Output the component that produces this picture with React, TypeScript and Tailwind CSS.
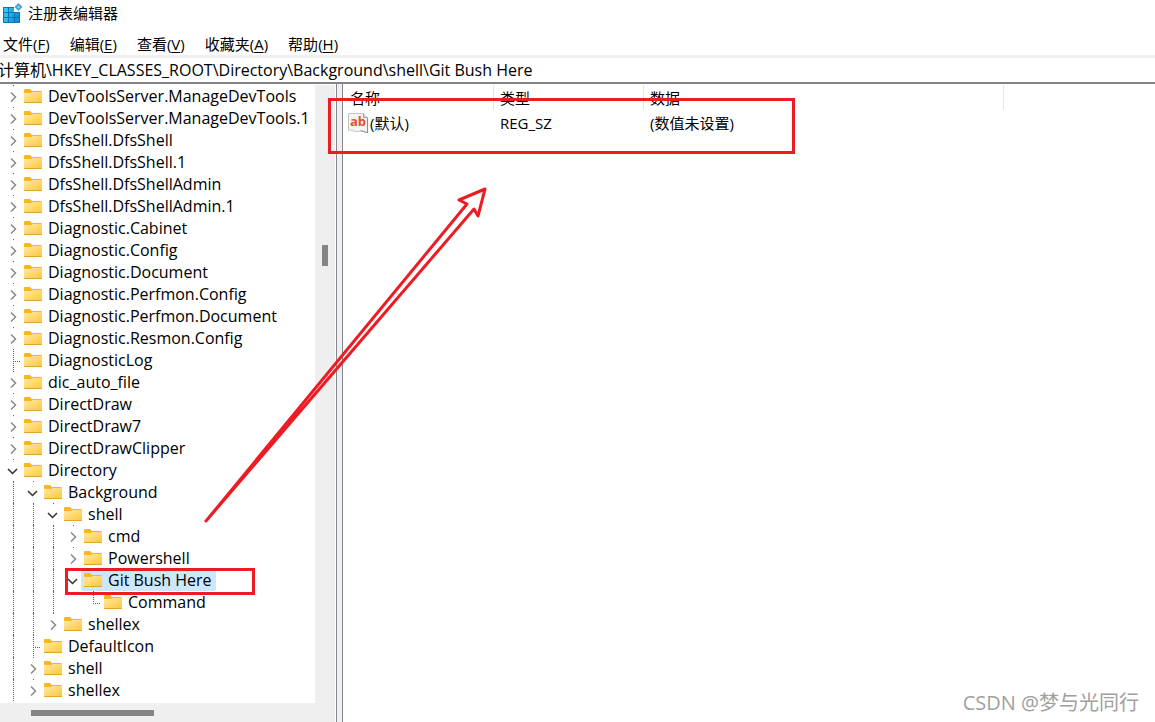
import React from "react";

type Node = {
  name: string;
  level: number;
  state?: "open" | "closed" | "leaf";
  guides?: number[];
  last?: boolean;
  selected?: boolean;
};

const nodes: Node[] = [
  { name: "DevToolsServer.ManageDevTools", level: 0 },
  { name: "DevToolsServer.ManageDevTools.1", level: 0 },
  { name: "DfsShell.DfsShell", level: 0 },
  { name: "DfsShell.DfsShell.1", level: 0 },
  { name: "DfsShell.DfsShellAdmin", level: 0 },
  { name: "DfsShell.DfsShellAdmin.1", level: 0 },
  { name: "Diagnostic.Cabinet", level: 0 },
  { name: "Diagnostic.Config", level: 0 },
  { name: "Diagnostic.Document", level: 0 },
  { name: "Diagnostic.Perfmon.Config", level: 0 },
  { name: "Diagnostic.Perfmon.Document", level: 0 },
  { name: "Diagnostic.Resmon.Config", level: 0 },
  { name: "DiagnosticLog", level: 0, state: "leaf" },
  { name: "dic_auto_file", level: 0 },
  { name: "DirectDraw", level: 0 },
  { name: "DirectDraw7", level: 0 },
  { name: "DirectDrawClipper", level: 0 },
  { name: "Directory", level: 0, state: "open" },
  { name: "Background", level: 1, state: "open", guides: [0] },
  { name: "shell", level: 2, state: "open", guides: [0, 1] },
  { name: "cmd", level: 3, guides: [0, 1, 2] },
  { name: "Powershell", level: 3, guides: [0, 1, 2] },
  { name: "Git Bush Here", level: 3, state: "open", guides: [0, 1, 2], selected: true },
  { name: "Command", level: 4, state: "leaf", guides: [0, 1, 2], last: true },
  { name: "shellex", level: 2, guides: [0, 1] },
  { name: "DefaultIcon", level: 1, state: "leaf", guides: [0] },
  { name: "shell", level: 1, guides: [0] },
  { name: "shellex", level: 1, guides: [0] },
];

const menus = [
  { label: "文件", hotkey: "F" },
  { label: "编辑", hotkey: "E" },
  { label: "查看", hotkey: "V" },
  { label: "收藏夹", hotkey: "A" },
  { label: "帮助", hotkey: "H" },
];

function RegeditIcon() {
  return (
    <svg width="20" height="20" viewBox="0 0 20 20" aria-hidden="true">
      <defs>
        <linearGradient id="cubes" x1="0" y1="0" x2="1" y2="0.3">
          <stop offset="0" stopColor="#3fd0f8" />
          <stop offset="1" stopColor="#0c8fdc" />
        </linearGradient>
      </defs>
      <path d="M0 4h11v5h6v11H0z" fill="#0b74b4" />
      <path
        d="M1 5h4v4H1zM6 5h5v4H6zM1 10h4v4H1zM6 10h5v4H6zM12 10h4v4h-4zM1 15h4v4H1zM6 15h5v4H6zM12 15h4v4h-4z"
        fill="url(#cubes)"
      />
      <path d="M15.500 0 19.500 4 15.500 8 11.500 4z" fill="#3c9fd0" />
      <path d="M15.500 2 17.500 4 15.500 6 13.500 4z" fill="#7cc8e8" />
    </svg>
  );
}

function FolderIcon() {
  return (
    <svg width="18" height="14" viewBox="0 0 18 14" className="shrink-0" aria-hidden="true">
      <defs>
        <linearGradient id="folder" x1="0" y1="0" x2="1" y2="1">
          <stop offset="0" stopColor="#ffe9a6" />
          <stop offset="1" stopColor="#ffc83d" />
        </linearGradient>
      </defs>
      <path d="M0 1a1 1 0 0 1 1-1h5l2 2h9a1 1 0 0 1 1 1v5H0z" fill="#f8b81c" />
      <path d="M0 4h7l1.500-1H18v10H0z" fill="url(#folder)" />
      <path d="M0 13h18v1H0z" fill="#e5a52a" />
    </svg>
  );
}

function StringIcon() {
  return (
    <svg width="20" height="20" viewBox="0 0 20 20" className="shrink-0" aria-hidden="true">
      <path
        d="M0.500 0.500h15l4 4v15c-3 0-4-2-7-1.500s-4 1-6.500 0-3.500-1-5.500-0.500z"
        fill="#f4f4f4"
        stroke="#c4c4c4"
      />
      <path d="M15.500 0.500v4h4" fill="#d8d8d8" stroke="#a0a0a0" />
      <path d="M19.500 5v14.500c-3 0-4-2-7-1.500" fill="none" stroke="#8e8e8e" />
      <text x="2" y="13" fontSize="13" fontWeight="700" fill="#dc5532" fontFamily="Open Sans">
        ab
      </text>
    </svg>
  );
}

function Expander({ state, last }: { state: string; last?: boolean }) {
  return (
    <svg width="20" height="22" viewBox="0 0 20 22" className="shrink-0" fill="none" aria-hidden="true">
      {state === "leaf" && (
        <path
          d={last ? "M12.5 0v12M12 12.5h9" : "M12.5 0v22M12 12.5h9"}
          stroke="#606060"
          strokeDasharray="1 1"
        />
      )}
      {state !== "leaf" && <path d="M12 0.500h1" stroke="#606060" />}
      {state === "closed" && <path d="m10 7.500 4.500 4.500-4.500 4.500" stroke="#8a8a8a" strokeWidth="1.500" />}
      {state === "open" && <path d="m7 10 4.500 4.500 4.500-4.500" stroke="#303030" strokeWidth="1.500" />}
    </svg>
  );
}

function TreeRow({ node }: { node: Node }) {
  const state = node.state ?? "closed";
  return (
    <li className="flex h-[22px] items-stretch pl-px">
      {Array.from({ length: node.level }, (_, i) => (
        <span key={i} className="flex w-5 shrink-0 pl-3">
          {node.guides?.includes(i) && <span className="border-l border-dotted border-[#606060]" />}
        </span>
      ))}
      <Expander state={state} last={node.last} />
      <button
        className={`flex items-center gap-1.5 whitespace-nowrap rounded-xs pl-[3px] pr-1 ${
          node.selected ? "bg-[#cce8ff]" : ""
        }`}
      >
        <FolderIcon />
        {node.name}
      </button>
    </li>
  );
}

function Values() {
  return (
    <table className="mt-px w-[661px] table-fixed border-separate border-spacing-0 text-left">
      <colgroup>
        <col className="w-[151px]" />
        <col className="w-[150px]" />
        <col />
      </colgroup>
      <thead>
        <tr className="h-[25px]">
          {["名称", "类型", "数据"].map((title, i) => (
            <th
              key={title}
              className={`border-r border-[#e5e5e5] p-0 font-normal ${i === 0 ? "pl-[7px]" : "pl-1.5"}`}
            >
              {title}
            </th>
          ))}
        </tr>
      </thead>
      <tbody>
        <tr className="h-[26px]">
          <td className="p-0 pl-[5px]">
            <div className="flex items-center gap-0.5">
              <StringIcon />
              (默认)
            </div>
          </td>
          <td className="p-0 pl-1.5">REG_SZ</td>
          <td className="p-0 pl-1.5">(数值未设置)</td>
        </tr>
      </tbody>
    </table>
  );
}

function Annotations() {
  return (
    <div className="pointer-events-none absolute inset-0">
      <div className="absolute left-[328px] top-[98px] h-14 w-[467px] border-3 border-[#ed1c24]" />
      <div className="absolute left-[65px] top-[568px] h-[27px] w-[190px] border-3 border-[#ed1c24]" />
      <svg className="absolute left-[190px] top-[180px]" width="310" height="350" viewBox="0 0 310 350">
        <path
          d="M16 341 277 24 269 20 295 9 288 36 284 29z"
          fill="none"
          stroke="#ed1c24"
          strokeWidth="3"
          strokeLinejoin="round"
        />
      </svg>
      <div className="absolute bottom-2 right-4 text-[20px] text-[#a0a0a0] [text-shadow:1px_1px_0_#fff]">
        CSDN @梦与光同行
      </div>
    </div>
  );
}

export default function App() {
  return (
    <div className="relative flex h-screen flex-col overflow-hidden bg-white font-['Open_Sans','Noto_Sans_CJK_SC',sans-serif] text-[15px] leading-[22px] text-black">
      <header className="flex h-7 items-center gap-[5px] pb-0.5 pl-[3px]">
        <RegeditIcon />
        <h1>注册表编辑器</h1>
      </header>
      <nav className="flex h-[27px] items-center gap-5 pl-[3px] pt-1">
        {menus.map((menu) => (
          <button key={menu.hotkey}>
            {menu.label}(<u className="underline-offset-2">{menu.hotkey}</u>)
          </button>
        ))}
      </nav>
      <div className="flex h-[29px] shrink-0 border-b-2 border-t-3 border-b-[#828487] border-t-[#f0f0f0]">
        <input
          aria-label="地址"
          className="-ml-0.5 flex-1 text-[16px] outline-none"
          defaultValue="计算机\HKEY_CLASSES_ROOT\Directory\Background\shell\Git Bush Here"
        />
      </div>
      <main className="flex min-h-0 flex-1">
        <aside className="flex w-[337px] shrink-0 flex-col border-r border-[#828790] pr-px">
          <div className="flex min-h-0 flex-1">
            <ul className="flex-1 overflow-hidden pt-px text-[16px] leading-[22px]">
              {nodes.map((node, i) => (
                <TreeRow key={i} node={node} />
              ))}
            </ul>
            <div className="mt-px w-5 bg-[#efefef] pl-[7px] pt-40">
              <div className="h-[21px] w-1.5 bg-[#858585]" />
            </div>
          </div>
          <div className="flex h-[19px] shrink-0 items-center bg-[#efefef] pl-[31px]">
            <div className="h-1.5 w-[123px] bg-[#858585]" />
          </div>
        </aside>
        <div className="w-[5px] shrink-0 bg-[#efefef]" />
        <section className="flex-1 overflow-hidden border-l border-[#828790]">
          <Values />
        </section>
      </main>
      <Annotations />
    </div>
  );
}
